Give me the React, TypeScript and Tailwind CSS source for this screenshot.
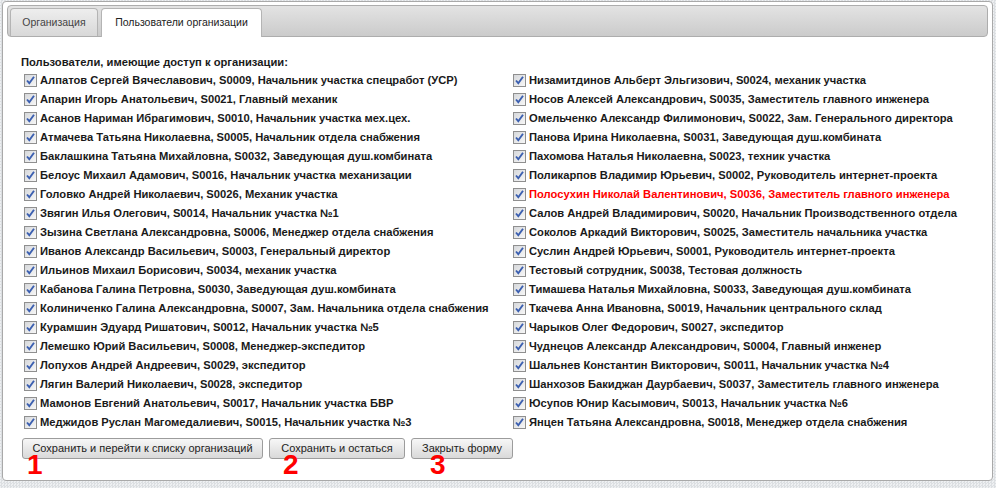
import React from "react";

const left: string[] = [
  "Алпатов Сергей Вячеславович, S0009, Начальник участка спецработ (УСР)",
  "Апарин Игорь Анатольевич, S0021, Главный механик",
  "Асанов Нариман Ибрагимович, S0010, Начальник участка мех.цех.",
  "Атмачева Татьяна Николаевна, S0005, Начальник отдела снабжения",
  "Баклашкина Татьяна Михайловна, S0032, Заведующая душ.комбината",
  "Белоус Михаил Адамович, S0016, Начальник участка механизации",
  "Головко Андрей Николаевич, S0026, Механик участка",
  "Звягин Илья Олегович, S0014, Начальник участка №1",
  "Зызина Светлана Александровна, S0006, Менеджер отдела снабжения",
  "Иванов Александр Васильевич, S0003, Генеральный директор",
  "Ильинов Михаил Борисович, S0034, механик участка",
  "Кабанова Галина Петровна, S0030, Заведующая душ.комбината",
  "Колиниченко Галина Александровна, S0007, Зам. Начальника отдела снабжения",
  "Курамшин Эдуард Ришатович, S0012, Начальник участка №5",
  "Лемешко Юрий Васильевич, S0008, Менеджер-экспедитор",
  "Лопухов Андрей Андреевич, S0029, экспедитор",
  "Лягин Валерий Николаевич, S0028, экспедитор",
  "Мамонов Евгений Анатольевич, S0017, Начальник участка БВР",
  "Меджидов Руслан Магомедалиевич, S0015, Начальник участка №3",
];

const right: string[] = [
  "Низамитдинов Альберт Эльгизович, S0024, механик участка",
  "Носов Алексей Александрович, S0035, Заместитель главного инженера",
  "Омельченко Александр Филимонович, S0022, Зам. Генерального директора",
  "Панова Ирина Николаевна, S0031, Заведующая душ.комбината",
  "Пахомова Наталья Николаевна, S0023, техник участка",
  "Поликарпов Владимир Юрьевич, S0002, Руководитель интернет-проекта",
  "Полосухин Николай Валентинович, S0036, Заместитель главного инженера",
  "Салов Андрей Владимирович, S0020, Начальник Производственного отдела",
  "Соколов Аркадий Викторович, S0025, Заместитель начальника участка",
  "Суслин Андрей Юрьевич, S0001, Руководитель интернет-проекта",
  "Тестовый сотрудник, S0038, Тестовая должность",
  "Тимашева Наталья Михайловна, S0033, Заведующая душ.комбината",
  "Ткачева Анна Ивановна, S0019, Начальник центрального склад",
  "Чарыков Олег Федорович, S0027, экспедитор",
  "Чуднецов Александр Александрович, S0004, Главный инженер",
  "Шальнев Константин Викторович, S0011, Начальник участка №4",
  "Шанхозов Бакиджан Даурбаевич, S0037, Заместитель главного инженера",
  "Юсупов Юнир Касымович, S0013, Начальник участка №6",
  "Янцен Татьяна Александровна, S0018, Менеджер отдела снабжения",
];

function Check() {
  return (
    <span className="relative w-[13px] h-[13px] shrink-0 border border-[#8f8f8f] bg-gradient-to-br from-[#d6d8db] to-[#f7f7f7]">
      <svg viewBox="0 0 11 11" className="absolute inset-0 w-[11px] h-[11px]">
        <path d="M2 5.5 L4.3 8.2 L9 1.8" fill="none" stroke="#3b5fb0" strokeWidth="1.9" />
      </svg>
    </span>
  );
}

function Row({ text }: { text: string }) {
  const red = text.startsWith("Полосухин");
  return (
    <label className="flex items-center h-[19px] gap-[3px]">
      <Check />
      <span className={`whitespace-nowrap ${red ? 'text-[#ff0000]' : 'text-[#1a1a1a]'}`}>{text}</span>
    </label>
  );
}

export default function App() {
  return (
    <div className="w-[996px] h-[488px] overflow-hidden pt-[1px] pl-[2px] bg-[#e9ebed] bg-[repeating-conic-gradient(#dcdfe2_0%_25%,#eef0f2_0%_50%)] bg-[length:3px_3px]" style={{ fontFamily: '"Liberation Sans", Arial, sans-serif' }}>
      <div className="w-[991px] h-[480px] bg-white border border-[#a9a9a9] rounded-[4px] px-[4px] pt-[3px] relative">
        <div className="h-[32px] rounded-[4px] border border-[#adadad] bg-gradient-to-b from-[#e3e3e3] to-[#cbcbcb] flex items-end gap-[3px] pl-[2px]">
          <div className="h-[28px] w-[88px] justify-center flex items-center rounded-t-[4px] border border-b-0 border-[#b4b4b4] bg-gradient-to-b from-[#eeeeee] to-[#d8d8d8] text-[10.5px] text-[#444]">Организация</div>
          <div className="h-[29px] w-[161px] -mb-px justify-center flex items-center rounded-t-[4px] border border-b-0 border-[#b4b4b4] bg-white text-[10.5px] text-[#222]">Пользователи организации</div>
        </div>
        <div className="pl-[14px] pt-[17px] text-[11.2px] font-bold">
          <div className="h-[16px] leading-[16px] text-[#1a1a1a]">Пользователи, имеющие доступ к организации:</div>
          <div className="grid grid-cols-[489px_1fr] pl-[3px] pt-[1px]">
            <div className="flex flex-col">
              {left.map((t) => <Row key={t} text={t} />)}
            </div>
            <div className="flex flex-col">
              {right.map((t) => <Row key={t} text={t} />)}
            </div>
          </div>
          <div className="flex gap-[6px] mt-[6px] pl-[1px] font-normal">
            <button className="h-[21px] w-[241px] whitespace-nowrap rounded-[3px] border border-[#9c9c9c] bg-gradient-to-b from-[#f7f7f7] to-[#d9d9d9] text-[11px] text-[#222]">Сохранить и перейти к списку организаций</button>
            <button className="h-[21px] w-[136px] whitespace-nowrap rounded-[3px] border border-[#9c9c9c] bg-gradient-to-b from-[#f7f7f7] to-[#d9d9d9] text-[11px] text-[#222]">Сохранить и остаться</button>
            <button className="h-[21px] w-[102px] whitespace-nowrap rounded-[3px] border border-[#9c9c9c] bg-gradient-to-b from-[#f7f7f7] to-[#d9d9d9] text-[11px] text-[#222]">Закрыть форму</button>
          </div>
        </div>
        <span className="absolute left-[24px] top-[453px] text-[28px] font-bold text-[#ff0000] leading-[20px]">1</span>
        <span className="absolute left-[280px] top-[453px] text-[28px] font-bold text-[#ff0000] leading-[20px]">2</span>
        <span className="absolute left-[427px] top-[453px] text-[28px] font-bold text-[#ff0000] leading-[20px]">3</span>
      </div>
    </div>
  );
}
